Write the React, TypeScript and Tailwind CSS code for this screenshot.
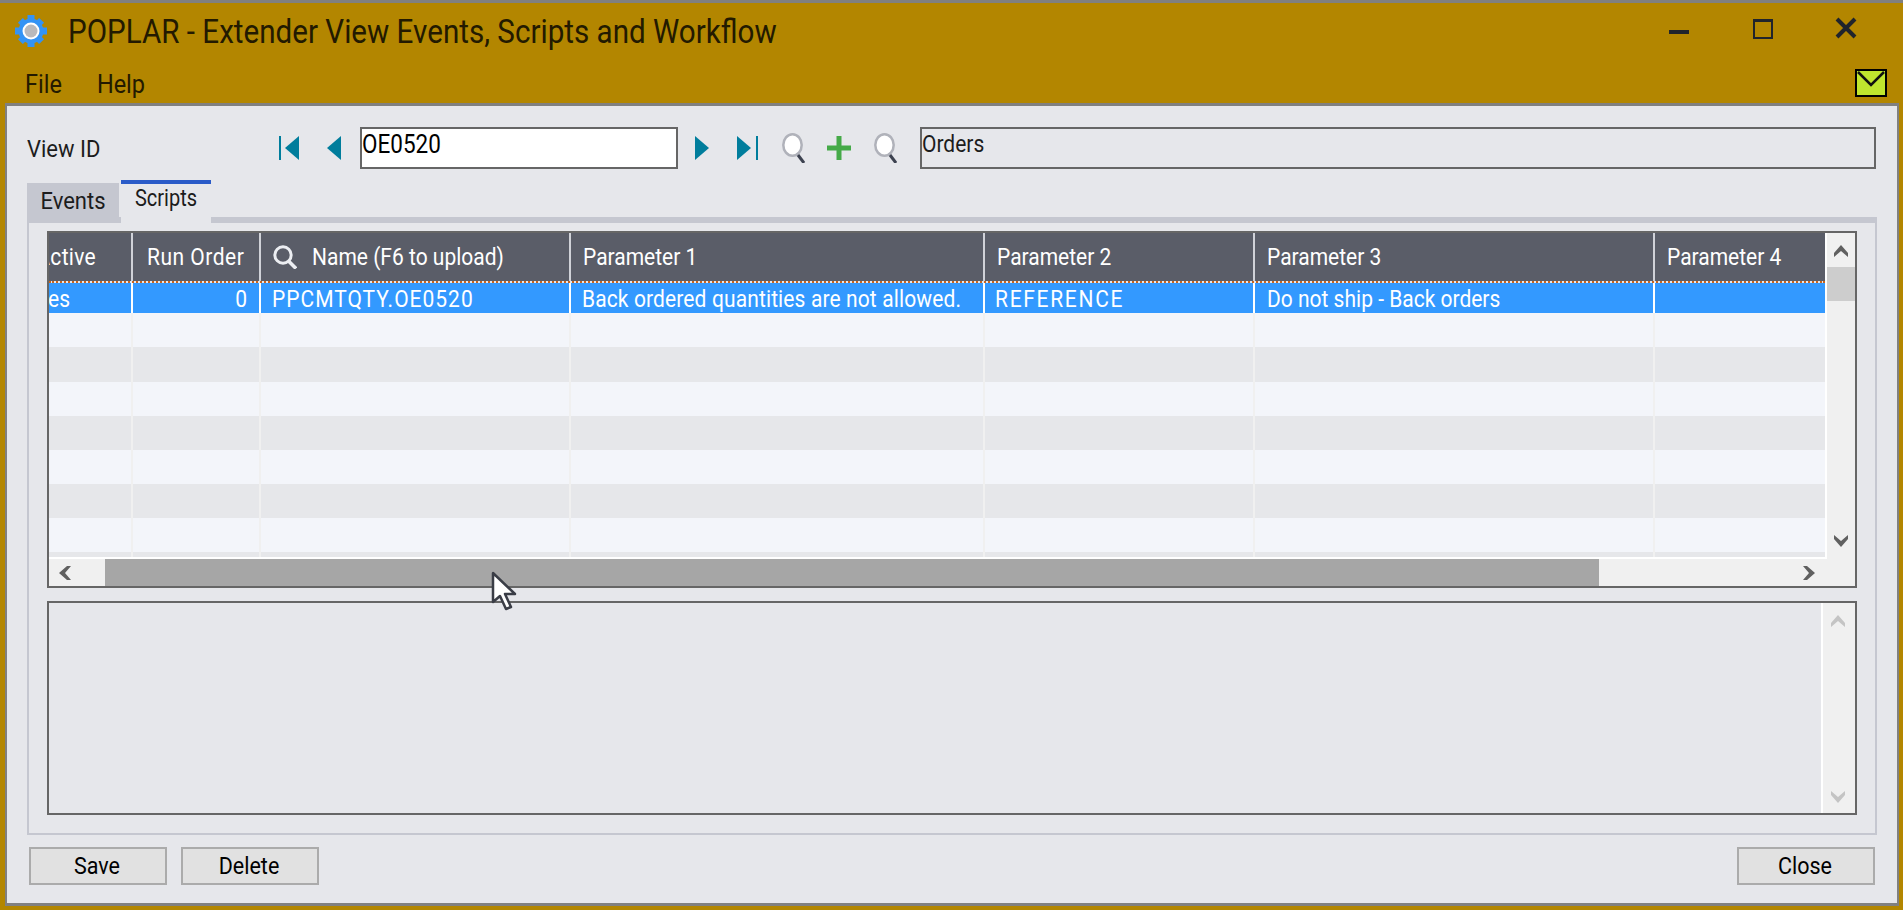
const columns = [
  { width: 'w-[84px]', head: 'Active', cell: 'Yes', headClass: 'justify-end pr-[35px] tracking-[0.3px]', cellClass: 'justify-end pr-[61px]' },
  { width: 'w-[128px]', head: 'Run Order', cell: '0', headClass: 'pl-[14px] tracking-[0.5px]', cellClass: 'justify-end pr-[12px]' },
  { width: 'w-[310px]', head: 'Name (F6 to upload)', cell: 'PPCMTQTY.OE0520', headClass: 'pl-[12px]', cellClass: 'pl-[11px] tracking-[1px]', search: true },
  { width: 'w-[414px]', head: 'Parameter 1', cell: 'Back ordered quantities are not allowed.', headClass: 'pl-[12px]', cellClass: 'pl-[11px] tracking-[0.12px]' },
  { width: 'w-[270px]', head: 'Parameter 2', cell: 'REFERENCE', headClass: 'pl-[12px]', cellClass: 'pl-[10px] tracking-[1.7px]' },
  { width: 'w-[400px]', head: 'Parameter 3', cell: 'Do not ship - Back orders', headClass: 'pl-[12px]', cellClass: 'pl-[12px]' },
  { width: 'w-[170px]', head: 'Parameter 4', cell: '', headClass: 'pl-[12px]', cellClass: 'pl-[12px]' },
];

const rows = [
  'h-[34px] bg-[#f3f5fa]',
  'h-[35px] bg-[#e6e7ea]',
  'h-[34px] bg-[#f3f5fa]',
  'h-[34px] bg-[#e6e7ea]',
  'h-[34px] bg-[#f3f5fa]',
  'h-[34px] bg-[#e6e7ea]',
  'h-[34px] bg-[#f3f5fa]',
  'h-[5px] bg-[#e6e7ea]',
];

const Triangle = ({ dir, bar }: { dir: 'left' | 'right'; bar?: boolean }) => (
  <svg width="22" height="24" viewBox="0 0 22 24" className="shrink-0">
    {dir === 'left' ? (
      <>
        {bar && <rect x="0" y="0" width="2" height="24" fill="#007d9c" />}
        <polygon points="20,0 20,24 6,12" fill="#007d9c" />
      </>
    ) : (
      <>
        <polygon points="0,0 0,24 14,12" fill="#007d9c" />
        {bar && <rect x="19" y="0" width="2" height="24" fill="#007d9c" />}
      </>
    )}
  </svg>
);

const Magnifier = () => (
  <svg width="24" height="30" viewBox="0 0 24 30" className="shrink-0">
    <ellipse cx="11.5" cy="12" rx="9.2" ry="10.7" fill="#fff" stroke="#b0b2ba" strokeWidth="2.5" />
    <line x1="17" y1="22" x2="23" y2="30" stroke="#3d4250" strokeWidth="3" />
  </svg>
);

const Chevron = ({ dir, color }: { dir: 'up' | 'down' | 'left' | 'right'; color: string }) => {
  const points = {
    up: '0,8 7,0 14,8 14,12 7,6 0,12',
    down: '0,0 7,6 14,0 14,4 7,12 0,4',
    left: '8,0 12,0 6,7 12,14 8,14 0,7',
    right: '0,0 4,0 12,7 4,14 0,14 6,7',
  }[dir];
  const vertical = dir === 'up' || dir === 'down';
  return (
    <svg width={vertical ? 14 : 12} height={vertical ? 12 : 14} viewBox={vertical ? '0 0 14 12' : '0 0 12 14'} className="shrink-0">
      <polygon points={points} fill={color} />
    </svg>
  );
};

const Button = ({ label }: { label: string }) => (
  <button className="w-[138px] h-[38px] border-2 border-[#ababab] bg-[#e1e1e1] text-[21.5px] leading-none text-black pr-[2px]">
    <span className="inline-block scale-y-[1.12]">{label}</span>
  </button>
);

export default function App() {
  return (
    <div
      className="w-[1903px] h-[911px] flex flex-col bg-[#b38600] border-t-[3px] border-[#808080] border-b border-b-white overflow-hidden relative text-[#1c1c1c]"
      style={{ fontFamily: 'Roboto, sans-serif' }}
    >
      {/* Title bar */}
      <div className="h-[56px] flex items-center shrink-0 pl-[15px]">
        <svg width="32" height="32" viewBox="0 0 32 32" className="shrink-0">
          <g fill="#3393f5">
            <circle cx="16" cy="16" r="12.5" />
            <rect x="12.5" y="0" width="7" height="32" />
            <rect x="0" y="12.5" width="32" height="7" />
            <rect x="12.5" y="1" width="7" height="30" transform="rotate(45 16 16)" />
            <rect x="12.5" y="1" width="7" height="30" transform="rotate(-45 16 16)" />
          </g>
          <circle cx="16" cy="16" r="8.5" fill="#fff" />
          <circle cx="16" cy="16" r="6.5" fill="#b9b9bc" />
        </svg>
        <span className="ml-[21px] mt-[4px] text-[29.6px] leading-none text-[#231a00] whitespace-nowrap scale-y-[1.1]">
          POPLAR - Extender View Events, Scripts and Workflow
        </span>
        <div className="ml-auto flex items-center">
          <div className="w-[20px] h-[4px] bg-[#20242c] mt-[2px]" />
          <div className="ml-[64px] w-[20px] h-[20px] border-2 border-t-[3px] border-[#20242c] -mt-[5px]" />
          <svg width="22" height="22" viewBox="0 0 22 22" className="ml-[62px] mr-[46px] -mt-[7px]">
            <path d="M2 2 L20 20 M20 2 L2 20" stroke="#20242c" strokeWidth="4" />
          </svg>
        </div>
      </div>

      {/* Menu bar */}
      <div className="h-[44px] flex shrink-0 pl-[25px] pt-[12px] text-[23.5px] leading-[26px] text-[#231a00]">
        <span className="scale-y-[1.1]">File</span>
        <span className="ml-[35px] scale-y-[1.1]">Help</span>
        <svg width="32" height="28" viewBox="0 0 32 28" className="ml-auto mr-[16px] -mt-[2px]">
          <rect x="1" y="1" width="30" height="26" fill="#bfe62e" stroke="#000" strokeWidth="2" />
          <path d="M3 3 L16 16 L29 3" fill="none" stroke="#111" strokeWidth="2.5" />
        </svg>
      </div>

      {/* Window body */}
      <div className="ml-[5px] mr-[4px] mb-[4px] h-[803px] shrink-0 border-t-[3px] border-x-2 border-b-[3px] border-[#808080] bg-[#e6e7eb] flex flex-col text-[21px] leading-none">
        {/* View ID row */}
        <div className="mt-[21px] h-[42px] flex items-center pl-[20px] pr-[21px] shrink-0">
          <span className="w-[252px] text-[22px] text-[#1c1c1c] mt-[2px] scale-y-[1.12] origin-left">View ID</span>
          <Triangle dir="left" bar />
          <div className="ml-[20px]"><Triangle dir="left" /></div>
          <div className="ml-[17px] w-[318px] h-[42px] border-2 border-[#666] bg-white text-black text-[22.5px] pt-[4px]">
            <span className="inline-block scale-y-[1.12]">OE0520</span>
          </div>
          <div className="ml-[17px]"><Triangle dir="right" /></div>
          <div className="ml-[20px]"><Triangle dir="right" bar /></div>
          <div className="ml-[22px]"><Magnifier /></div>
          <svg width="24" height="24" viewBox="0 0 24 24" className="ml-[22px] shrink-0">
            <path d="M12 0 V24 M0 12 H24" stroke="#45aa48" strokeWidth="5" />
          </svg>
          <div className="ml-[22px]"><Magnifier /></div>
          <div className="ml-[23px] flex-1 h-[42px] border-2 border-[#666] pt-[5px]">
            <span className="inline-block scale-y-[1.12]">Orders</span>
          </div>
        </div>

        {/* Tabs */}
        <div className="mt-[10px] -mb-[6px] h-[44px] flex items-end pl-[20px] relative z-10 shrink-0">
          <div className="w-[92px] h-[40px] bg-[#c5c7d0] flex items-center justify-center text-[22px] pb-[4px]">
            <span className="scale-y-[1.12]">Events</span>
          </div>
          <div className="ml-[2px] w-[90px] h-[43px] border-t-4 border-[#2a5bc8] bg-[#e6e7eb] flex items-center justify-center text-[20px] pb-[11px]">
            <span className="scale-y-[1.15]">Scripts</span>
          </div>
        </div>

        {/* Tab panel */}
        <div className="mx-[20px] h-[618px] shrink-0 border-t-[6px] border-x-2 border-b-2 border-[#c5c7d0] px-[18px] pt-[8px] flex flex-col">
          {/* Grid */}
          <div className="h-[357px] shrink-0 border-2 border-[#666] flex flex-col">
            <div className="h-[326px] flex shrink-0">
              <div className="w-[1776px] shrink-0 flex flex-col overflow-hidden border-b-2 border-white">
                <div className="flex h-[48px] shrink-0 bg-[#5a5d68] text-white">
                  {columns.map((col, i) => (
                    <div
                      key={col.head}
                      className={`${col.width} ${col.headClass} shrink-0 flex items-center overflow-hidden whitespace-nowrap ${i < 6 ? 'border-r-2 border-[#d0d2d8]' : ''}`}
                    >
                      {col.search && (
                        <svg width="24" height="24" viewBox="0 0 24 24" className="shrink-0 mr-[15px]">
                          <circle cx="10" cy="10" r="8.2" fill="none" stroke="#eceef2" strokeWidth="3" />
                          <line x1="15.5" y1="16" x2="23" y2="23.5" stroke="#eceef2" strokeWidth="3.5" />
                        </svg>
                      )}
                      <span className="scale-y-[1.12]">{col.head}</span>
                    </div>
                  ))}
                </div>
                <div className="h-[2px] shrink-0 border-b-2 border-dotted border-[#c8641e]" />
                <div className="flex h-[30px] shrink-0 bg-[#3399ff] text-white">
                  {columns.map((col, i) => (
                    <div
                      key={col.head}
                      className={`${col.width} ${col.cellClass} shrink-0 flex items-center overflow-hidden whitespace-nowrap pt-[2px] ${i < 6 ? 'border-r-2 border-white' : ''}`}
                    >
                      <span className="scale-y-[1.12]">{col.cell}</span>
                    </div>
                  ))}
                </div>
                {rows.map((row, r) => (
                  <div key={r} className={`flex shrink-0 ${row}`}>
                    {columns.map((col, i) => (
                      <div key={col.head} className={`${col.width} shrink-0 ${i < 6 ? 'border-r-2 border-[#f0f0f0]' : ''}`} />
                    ))}
                  </div>
                ))}
              </div>
              <div className="flex-1 border-l-2 border-white bg-[#f0f0f0] flex flex-col items-center">
                <div className="mt-[12px]"><Chevron dir="up" color="#606060" /></div>
                <div className="mt-[10px] w-full h-[34px] bg-[#cdcdcd]" />
                <div className="mt-auto mb-[12px]"><Chevron dir="down" color="#606060" /></div>
              </div>
            </div>
            <div className="flex-1 flex bg-[#f0f0f0]">
              <div className="w-[56px] shrink-0 flex items-center pl-[10px]"><Chevron dir="left" color="#606060" /></div>
              <div className="w-[1494px] shrink-0 bg-[#a6a6a6]" />
              <div className="flex-1 flex items-center pl-[204px]"><Chevron dir="right" color="#606060" /></div>
            </div>
          </div>

          {/* Memo box */}
          <div className="mt-[13px] h-[214px] shrink-0 border-2 border-[#666] flex justify-end">
            <div className="w-[34px] border-l-2 border-white bg-[#f0f0f0] flex flex-col items-center pr-[2px]">
              <div className="mt-[12px]"><Chevron dir="up" color="#c4c4c4" /></div>
              <div className="mt-auto mb-[10px]"><Chevron dir="down" color="#c4c4c4" /></div>
            </div>
          </div>
        </div>

        {/* Buttons */}
        <div className="mt-[12px] flex px-[22px] shrink-0">
          <Button label="Save" />
          <div className="ml-[14px]"><Button label="Delete" /></div>
          <div className="ml-auto"><Button label="Close" /></div>
        </div>
      </div>

      {/* Mouse cursor */}
      <svg width="26" height="41" viewBox="0 0 26 41" className="absolute left-[491px] top-[568px]">
        <path d="M2 2 L2 31 L9 25 L15 38 L20 36 L14 23 L24 23 Z" fill="#fff" stroke="#3a3d46" strokeWidth="2.5" strokeLinejoin="round" />
      </svg>
    </div>
  );
}
